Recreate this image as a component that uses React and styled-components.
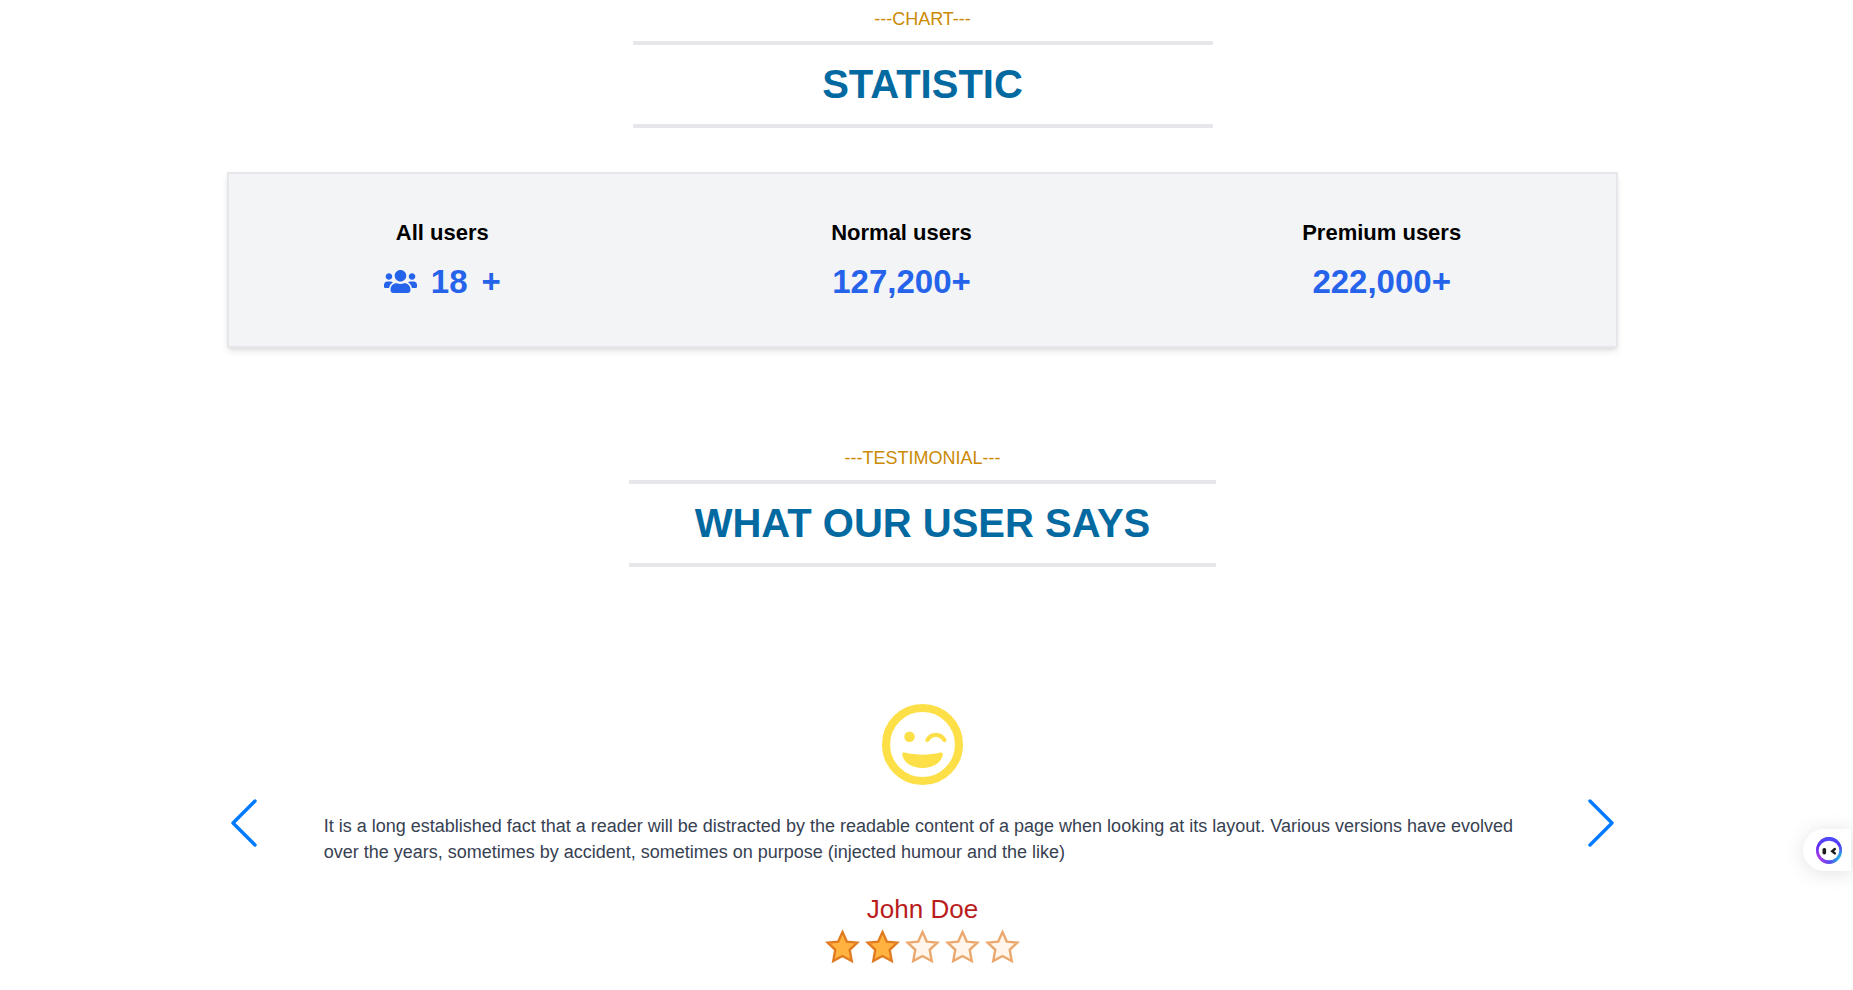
import React from "react";
import styled, { createGlobalStyle } from "styled-components";
import { FaUsers } from "react-icons/fa";

const GlobalStyle = createGlobalStyle`
  *, *::before, *::after { box-sizing: border-box; }
  body {
    margin: 0;
    background: #ffffff;
    color: #000000;
    font-family: "Liberation Sans", Arial, sans-serif;
    font-size: 18px;
    line-height: 26px;
  }
  h2, h3, p { margin: 0; }
`;

const Page = styled.main`
  min-height: 100vh;
  padding: 6px 6px 16px 0;
  border-right: 2px solid #fcfcfc;
`;

const Container = styled.div`
  width: calc(75vw + 2px);
  margin: 0 auto;
`;

const SectionHeader = styled.header`
  display: flex;
  flex-direction: column;
  align-items: center;
`;

const Eyebrow = styled.p`
  color: #ca8a04;
  font-size: 18px;
  line-height: 26px;
  margin-bottom: 9px;
`;

const SectionTitle = styled.h2`
  min-width: 580px;
  padding: 17px 66px 18px;
  border-top: 4px solid #e5e7eb;
  border-bottom: 4px solid #e5e7eb;
  color: #0369a1;
  font-size: 40px;
  line-height: 44px;
  font-weight: 700;
  text-align: center;
`;

const StatCard = styled.section`
  display: flex;
  justify-content: space-around;
  margin: 44px 0 97px;
  padding: 43px 2px 44px;
  border: 2px solid #e5e7eb;
  background: #f3f4f6;
  box-shadow: 0 4px 7px -1px rgba(0, 0, 0, 0.1), 0 2px 4px -2px rgba(0, 0, 0, 0.1);
`;

const Stat = styled.div`
  padding: 0 ${(p) => (p.$wide ? 24 : 0)}px;
  text-align: center;
`;

const StatLabel = styled.h3`
  font-size: 22px;
  line-height: 32px;
  font-weight: 700;
`;

const StatValue = styled.p`
  display: flex;
  align-items: center;
  justify-content: center;
  gap: ${(p) => (p.$gap ? 14 : 0)}px;
  margin-top: 13px;
  color: #2563eb;
  font-size: 33px;
  line-height: 40px;
  font-weight: 700;

  svg {
    margin-bottom: 2px;
  }
`;

const Carousel = styled.section`
  display: flex;
  align-items: center;
  justify-content: space-between;
  margin-top: 115px;
`;

const ArrowButton = styled.button`
  display: flex;
  flex: none;
  margin: 0 4px;
  padding: 0;
  border: 0;
  background: none;
  color: #007aff;
  cursor: pointer;
`;

const Slide = styled.article`
  display: flex;
  flex: 1;
  flex-direction: column;
  align-items: center;
  padding: 22px 62px 0;
`;

const Quote = styled.p`
  width: 100%;
  margin: 28px 0 26px;
  color: #374151;
  font-size: 18px;
  line-height: 26px;
`;

const Author = styled.h3`
  color: #b91c1c;
  font-size: 26px;
  line-height: 36px;
  font-weight: 400;
`;

const Rating = styled.div`
  display: flex;
  gap: 5px;
  margin-top: 2px;
`;

const AssistantButton = styled.button`
  position: fixed;
  right: 2px;
  top: 829px;
  display: flex;
  align-items: center;
  width: 48px;
  height: 42px;
  padding: 0 0 0 13px;
  border: 0;
  border-radius: 21px 0 0 21px;
  background: #ffffff;
  box-shadow: 0 2px 20px rgba(0, 0, 0, 0.12);
  cursor: pointer;
`;

const WinkFace = () => (
  <svg width="81" height="81" viewBox="2 2 20 20" fill="none" aria-hidden="true">
    <circle cx="12" cy="12" r="9" stroke="#fde047" strokeWidth="2" />
    <circle cx="8.8" cy="10.1" r="1.3" fill="#fde047" />
    <path d="M13.2 10.9C14.2 9.2 16.4 9.2 17.4 10.9" stroke="#fde047" strokeWidth="1.05" strokeLinecap="round" />
    <path
      d="M7.6 14C10.4 14.7 13.6 14.7 16.4 14C16.8 13.9 17.1 14.1 17 14.6C16.6 16.6 14.5 17.8 12 17.8C9.5 17.8 7.4 16.6 7 14.6C6.9 14.1 7.2 13.9 7.6 14Z"
      fill="#fde047"
    />
  </svg>
);

const Star = ({ filled }) => (
  <svg width="35" height="35" viewBox="0 0 34 34" opacity={filled ? 1 : 0.65} aria-hidden="true">
    <path
      d="M17 3L21.2 12.2L31.4 13.2L24 20.2L26 31.2L17 26.3L8 31.2L10 20.2L2.6 13.2L12.8 12.2Z"
      fill={filled ? "#ffb23f" : "#fff1e0"}
      stroke="#e17b21"
      strokeWidth="2.3"
    />
  </svg>
);

const Arrow = ({ next }) => (
  <svg width="27" height="48" viewBox="0 0 27 48" fill="none" aria-hidden="true">
    <path
      d={next ? "M3 2L25 24L3 46" : "M24 2L2 24L24 46"}
      stroke="currentColor"
      strokeWidth="3.4"
      strokeLinecap="round"
      strokeLinejoin="round"
    />
  </svg>
);

const AssistantLogo = () => (
  <svg width="26" height="27" viewBox="0 0 26 27" fill="none" aria-hidden="true">
    <defs>
      <linearGradient id="ring" x1="3" y1="20" x2="24" y2="20" gradientUnits="userSpaceOnUse">
        <stop stopColor="#a63ae8" />
        <stop offset="0.5" stopColor="#5a48f0" />
        <stop offset="1" stopColor="#22b8e0" />
      </linearGradient>
      <linearGradient id="crown" x1="13" y1="0" x2="13" y2="20" gradientUnits="userSpaceOnUse">
        <stop stopColor="#4a50ff" />
        <stop offset="0.4" stopColor="#5a30f5" />
        <stop offset="1" stopColor="#5a30f5" stopOpacity="0" />
      </linearGradient>
    </defs>
    <ellipse cx="13" cy="13.5" rx="13" ry="13.5" fill="url(#ring)" />
    <ellipse cx="13" cy="13.5" rx="13" ry="13.5" fill="url(#crown)" />
    <ellipse cx="13" cy="13.5" rx="10.3" ry="9.8" fill="#ffffff" />
    <rect x="6.5" y="11" width="3.6" height="6.4" rx="1.6" fill="#1a1a1a" />
    <path d="M18.8 12L16.2 14.2L18.8 16.4" stroke="#1a1a1a" strokeWidth="2.4" strokeLinecap="round" />
  </svg>
);

const Heading = ({ eyebrow, title }) => (
  <SectionHeader>
    <Eyebrow>---{eyebrow}---</Eyebrow>
    <SectionTitle>{title}</SectionTitle>
  </SectionHeader>
);

export default function App() {
  const rating = 2;
  return (
    <Page>
      <GlobalStyle />
      <Container>
        <Heading eyebrow="CHART" title="STATISTIC" />
        <StatCard>
          <Stat>
            <StatLabel>All users</StatLabel>
            <StatValue $gap>
              <FaUsers aria-hidden="true" />
              <span>18</span>
              <span>+</span>
            </StatValue>
          </Stat>
          <Stat $wide>
            <StatLabel>Normal users</StatLabel>
            <StatValue>127,200+</StatValue>
          </Stat>
          <Stat>
            <StatLabel>Premium users</StatLabel>
            <StatValue>222,000+</StatValue>
          </Stat>
        </StatCard>
        <Heading eyebrow="TESTIMONIAL" title="WHAT OUR USER SAYS" />
        <Carousel aria-label="Testimonials">
          <ArrowButton type="button" aria-label="Previous testimonial">
            <Arrow />
          </ArrowButton>
          <Slide>
            <WinkFace />
            <Quote>
              It is a long established fact that a reader will be distracted by the readable content of a page when
              looking at its layout. Various versions have evolved over the years, sometimes by accident, sometimes on
              purpose (injected humour and the like)
            </Quote>
            <Author>John Doe</Author>
            <Rating role="img" aria-label="Rated 2 out of 5">
              {[1, 2, 3, 4, 5].map((n) => (
                <Star key={n} filled={n <= rating} />
              ))}
            </Rating>
          </Slide>
          <ArrowButton type="button" aria-label="Next testimonial">
            <Arrow next />
          </ArrowButton>
        </Carousel>
      </Container>
      <AssistantButton type="button" aria-label="Open assistant">
        <AssistantLogo />
      </AssistantButton>
    </Page>
  );
}
